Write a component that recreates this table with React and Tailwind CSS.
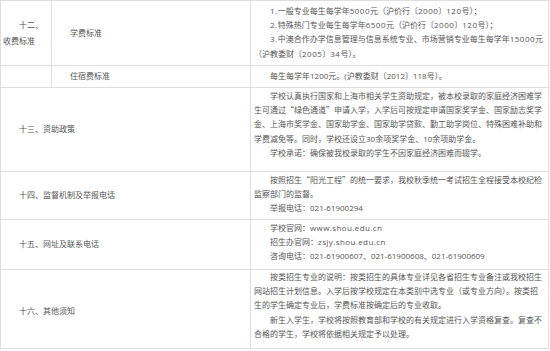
function L({ children, t = "" }) {
  return <span className={"font-['Open_Sans',sans-serif] " + t}>{children}</span>;
}

export default function App() {
  const cellL = "bg-white flex items-center pl-[2px]";
  const cellR = "bg-white pl-[3px] whitespace-nowrap";
  const w = "tracking-[0.5px]";
  const u = "tracking-[0.4px]";
  return (
    <div className="w-[550px] h-[351px] bg-white font-['Noto_Sans_CJK_SC','Noto_Sans',sans-serif] text-[8px] leading-[14.2px] text-[#555]">
      <div className="grid w-[549px] grid-cols-[50px_198px_297px] grid-rows-[64px_21px_83px_47px_49px_78px] gap-px bg-[#dedede] p-px">
        {/* Row 1 */}
        <div className={cellL}>
          <p className="indent-[2em] leading-[16.5px]">十二、<br />收费标准</p>
        </div>
        <div className={cellL}>
          <p className="indent-[2em]">学费标准</p>
        </div>
        <div className={cellR + " pt-[3px]"}>
          <p className="indent-[2em]"><L t={w}>1.</L>一般专业每生每学年<L t={w}>5000</L>元（沪价行〔<L t={w}>2000</L>〕<L t={w}>120</L>号）；</p>
          <p className="indent-[2em]"><L t={w}>2.</L>特殊热门专业每生每学年<L t={w}>6500</L>元（沪价行〔<L t={w}>2000</L>〕<L t={w}>120</L>号）；</p>
          <p className="indent-[2em]"><L t={w}>3.</L>中澳合作办学信息管理与信息系统专业、市场营销专业每生每学年<L t={w}>15000</L>元<br />（沪教委财〔<L t={w}>2005</L>〕<L t={w}>34</L>号）。</p>
        </div>

        {/* Row 2 */}
        <div className="bg-white" />
        <div className={cellL}>
          <p className="indent-[2em]">住宿费标准</p>
        </div>
        <div className={cellR + " flex items-center"}>
          <p className="indent-[2em]">每生每学年<L>1200</L>元。<L>(</L>沪教委财〔<L>2012</L>〕<L>118</L>号）。</p>
        </div>

        {/* Row 3 */}
        <div className={cellL + " col-span-2"}>
          <p className="indent-[2em]">十三、资助政策</p>
        </div>
        <div className={cellR + " pt-[1px]"}>
          <p className="indent-[2em]">
            学校认真执行国家和上海市相关学生资助规定，被本校录取的家庭经济困难学<br />
            生可通过“绿色通道”申请入学，入学后可按规定申请国家奖学金、国家励志奖学<br />
            金、上海市奖学金、国家助学金、国家助学贷款、勤工助学岗位、特殊困难补助和<br />
            学费减免等。同时，学校还设立<L>30</L>余项奖学金、<L>10</L>余项助学金。
          </p>
          <p className="indent-[2em]">学校承诺：确保被我校录取的学生不因家庭经济困难而辍学。</p>
        </div>

        {/* Row 4 */}
        <div className={cellL + " col-span-2"}>
          <p className="indent-[2em]">十四、监督机制及举报电话</p>
        </div>
        <div className={cellR + " pt-[1px]"}>
          <p className="indent-[2em]">
            按照招生“阳光工程”的统一要求，我校秋季统一考试招生全程接受本校纪检<br />
            监察部门的监督。
          </p>
          <p className="indent-[2em]">举报电话：<L>021-61900294</L></p>
        </div>

        {/* Row 5 */}
        <div className={cellL + " col-span-2"}>
          <p className="indent-[2em]">十五、网址及联系电话</p>
        </div>
        <div className={cellR + " pt-[1px]"}>
          <p className="indent-[2em]">学校官网：<L t={u}>www.shou.edu.cn</L></p>
          <p className="indent-[2em]">招生办官网：<L t={u}>zsjy.shou.edu.cn</L></p>
          <p className="indent-[2em]">咨询电话：<L>021-61900607</L>、<L>021-61900608</L>、<L>021-61900609</L></p>
        </div>

        {/* Row 6 */}
        <div className={cellL + " col-span-2 pt-[4px]"}>
          <p className="indent-[2em]">十六、其他须知</p>
        </div>
        <div className={cellR}>
          <p className="indent-[2em]">
            按类招生专业的说明：按类招生的具体专业详见各省招生专业备注或我校招生<br />
            网站招生计划信息。入学后按学校规定在本类别中选专业（或专业方向）。按类招<br />
            生的学生确定专业后，学费标准按确定后的专业收取。
          </p>
          <p className="indent-[2em]">
            新生入学生，学校将按照教育部和学校的有关规定进行入学资格复查。复查不<br />
            合格的学生，学校将依据相关规定予以处理。
          </p>
        </div>
      </div>
    </div>
  );
}
